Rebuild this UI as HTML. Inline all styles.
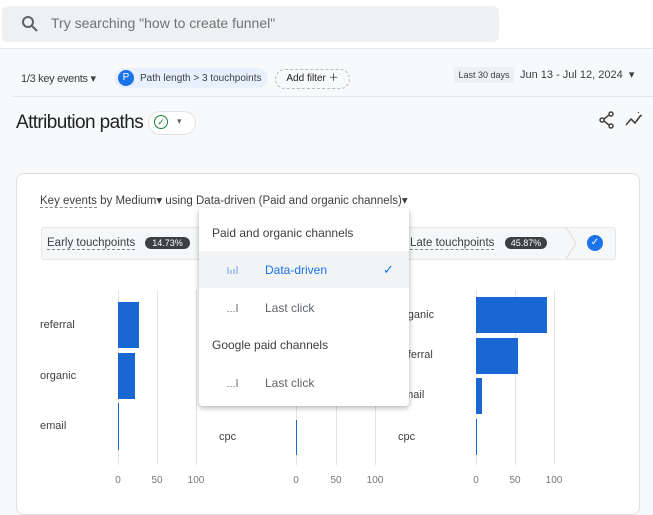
<!DOCTYPE html><html><head><style>
body{margin:0;width:653px;height:500px;background:#f8f9fa;font-family:"Liberation Sans",sans-serif;color:#202124;position:relative;overflow:hidden}
.a{position:absolute}
.t{font-size:11px;color:#3c4043}
.v{position:absolute;width:1px;background:#e3e3e3}
.b{position:absolute;background:#1967d2}
.tk{position:absolute;font-size:10px;color:#777;top:475px;transform:translateX(-50%)}
.lb{position:absolute;font-size:11px;color:#3c4043}
</style></head><body>
<div class="a" style="left:0;top:0;width:653px;height:48px;background:#fff;border-bottom:1px solid #e8e8e8"></div>
<div class="a" style="left:2px;top:6px;width:497px;height:36px;background:#eef0f2;border-radius:6px"></div>
<svg class="a" style="left:21px;top:15px" width="18" height="18" viewBox="0 0 18 18"><circle cx="7" cy="7" r="5" fill="none" stroke="#5f6368" stroke-width="2"/><path d="M11 11l5 5" stroke="#5f6368" stroke-width="2"/></svg>
<div class="a" style="left:51px;top:15px;font-size:14px;color:#6f7378">Try searching "how to create funnel"</div>
<div class="a t" style="left:21px;top:72px;letter-spacing:-0.3px">1/3 key events ▾</div>
<div class="a" style="left:114px;top:68px;width:154px;height:20px;background:#e8f0fe;border-radius:10px"></div>
<div class="a" style="left:118px;top:70px;width:16px;height:16px;border-radius:8px;background:#1a73e8;color:#fff;font-size:10px;text-align:center;line-height:16px">P</div>
<div class="a" style="left:140px;top:73px;font-size:10px;color:#3c4043">Path length &gt; 3 touchpoints</div>
<div class="a" style="left:275px;top:69px;width:73px;height:18px;border:1px dashed #bbb;border-radius:10px;font-size:10px;line-height:18px;text-align:center">Add filter ＋</div>
<div class="a" style="left:454px;top:67px;width:60px;height:16px;background:#eef0f2;font-size:9px;line-height:16px;text-align:center;color:#3c4043">Last 30 days</div>
<div class="a t" style="left:520px;top:68px;font-size:11px">Jun 13 - Jul 12, 2024 &nbsp;▾</div>
<div class="a" style="left:12px;top:96px;width:641px;height:1px;background:#e6e6e6"></div>
<div class="a" style="left:16px;top:112px;font-size:19px;color:#202124;letter-spacing:-0.6px">Attribution paths</div>
<div class="a" style="left:148px;top:111px;width:46px;height:22px;border:1px solid #e2e2e2;border-radius:12px;background:#fff"></div>
<div class="a" style="left:154px;top:115px;width:12px;height:12px;border:1.5px solid #188038;border-radius:50%;color:#188038;font-size:9px;line-height:12px;text-align:center">✓</div>
<div class="a" style="left:177px;top:116px;font-size:9px;color:#5f6368">▾</div>
<svg class="a" style="left:598px;top:111px" width="18" height="18" viewBox="0 0 18 18"><circle cx="13" cy="3" r="2" fill="none" stroke="#444" stroke-width="1.5"/><circle cx="4" cy="9" r="2" fill="none" stroke="#444" stroke-width="1.5"/><circle cx="13" cy="15" r="2" fill="none" stroke="#444" stroke-width="1.5"/><path d="M6 8l5-4M6 10l5 4" stroke="#444" stroke-width="1.5"/></svg>
<svg class="a" style="left:624px;top:111px" width="20" height="18" viewBox="0 0 20 18"><path d="M2 14l5-6 4 4 6-8" fill="none" stroke="#444" stroke-width="1.6"/><path d="M14 2l1-1M17 5l1-1" stroke="#444"/></svg>
<div class="a" style="left:16px;top:173px;width:622px;height:340px;background:#fff;border:1px solid #dedede;border-radius:8px"></div>
<div class="a t" style="left:40px;top:193px;font-size:11.5px"><span style="border-bottom:1px dashed #888">Key events</span> by Medium▾ using Data-driven (Paid and organic channels)▾</div>
<div class="a" style="left:41px;top:227px;width:573px;height:31px;background:#f6f7f8;border:1px solid #e6e6e6;border-radius:3px"></div>
<div class="a t" style="left:47px;top:237px;font-size:11.5px;border-bottom:1px dashed #888">Early touchpoints</div>
<div class="a" style="left:145px;top:237px;width:45px;height:12px;background:#3c4043;border-radius:6px;color:#fff;font-size:9px;text-align:center;line-height:12px">14.73%</div>
<div class="a t" style="left:410px;top:237px;font-size:11.5px;border-bottom:1px dashed #888">Late touchpoints</div>
<div class="a" style="left:505px;top:237px;width:42px;height:12px;background:#3c4043;border-radius:6px;color:#fff;font-size:9px;text-align:center;line-height:12px">45.87%</div>
<svg class="a" style="left:565px;top:227px" width="12" height="32"><path d="M1 0l10 16-10 16" fill="none" stroke="#ddd"/></svg>
<div class="a" style="left:587px;top:235px;width:16px;height:16px;border-radius:50%;background:#1a73e8;color:#fff;font-size:10px;line-height:16px;text-align:center">✓</div>
<div class="v" style="left:118px;top:290px;height:175px"></div><div class="v" style="left:157px;top:290px;height:175px"></div><div class="v" style="left:196px;top:290px;height:175px"></div>
<div class="v" style="left:296px;top:290px;height:175px"></div><div class="v" style="left:336px;top:290px;height:175px"></div><div class="v" style="left:375px;top:290px;height:175px"></div>
<div class="v" style="left:476px;top:290px;height:175px"></div><div class="v" style="left:515px;top:290px;height:175px"></div><div class="v" style="left:554px;top:290px;height:175px"></div>
<div class="b" style="left:118px;top:302px;width:21px;height:46px"></div>
<div class="b" style="left:118px;top:353px;width:17px;height:46px"></div>
<div class="b" style="left:118px;top:403px;width:1px;height:47px"></div>
<div class="b" style="left:296px;top:420px;width:1px;height:35px"></div>
<div class="b" style="left:476px;top:297px;width:71px;height:36px"></div>
<div class="b" style="left:476px;top:338px;width:42px;height:36px"></div>
<div class="b" style="left:476px;top:378px;width:6px;height:36px"></div>
<div class="b" style="left:476px;top:419px;width:1px;height:36px"></div>
<div class="lb" style="left:40px;top:319px">referral</div>
<div class="lb" style="left:40px;top:370px">organic</div>
<div class="lb" style="left:40px;top:420px">email</div>
<div class="lb" style="left:219px;top:431px">cpc</div>
<div class="lb" style="left:398px;top:309px">organic</div>
<div class="lb" style="left:398px;top:349px">referral</div>
<div class="lb" style="left:398px;top:389px">email</div>
<div class="lb" style="left:398px;top:431px">cpc</div>
<div class="tk" style="left:118px">0</div><div class="tk" style="left:157px">50</div><div class="tk" style="left:196px">100</div>
<div class="tk" style="left:296px">0</div><div class="tk" style="left:336px">50</div><div class="tk" style="left:375px">100</div>
<div class="tk" style="left:476px">0</div><div class="tk" style="left:515px">50</div><div class="tk" style="left:554px">100</div>
<div class="a" style="left:199px;top:208px;width:210px;height:198px;background:#fff;border-radius:4px;box-shadow:0 2px 6px rgba(0,0,0,.3)">
<div class="a" style="left:13px;top:18px;font-size:12px;color:#3c4043">Paid and organic channels</div>
<div class="a" style="left:0;top:43px;width:210px;height:37px;background:#f1f3f4"></div>
<svg class="a" style="left:28px;top:57px" width="12" height="10"><path d="M1 2v7M4 5v4M7 4v5M10 1v8" stroke="#8ab4f8" stroke-width="1.3"/></svg>
<div class="a" style="left:66px;top:55px;font-size:12px;color:#1a73e8">Data-driven</div>
<div class="a" style="left:184px;top:54px;font-size:13px;color:#1a73e8">✓</div>
<svg class="a" style="left:28px;top:95px" width="12" height="10"><path d="M1 8v1M4 8v1M7 8v1M10 1v8" stroke="#888" stroke-width="1.3"/></svg>
<div class="a" style="left:66px;top:93px;font-size:12px;color:#5f6368">Last click</div>
<div class="a" style="left:13px;top:130px;font-size:12px;color:#3c4043">Google paid channels</div>
<svg class="a" style="left:28px;top:170px" width="12" height="10"><path d="M1 8v1M4 8v1M7 8v1M10 1v8" stroke="#888" stroke-width="1.3"/></svg>
<div class="a" style="left:66px;top:168px;font-size:12px;color:#5f6368">Last click</div>
</div>
</body></html>
